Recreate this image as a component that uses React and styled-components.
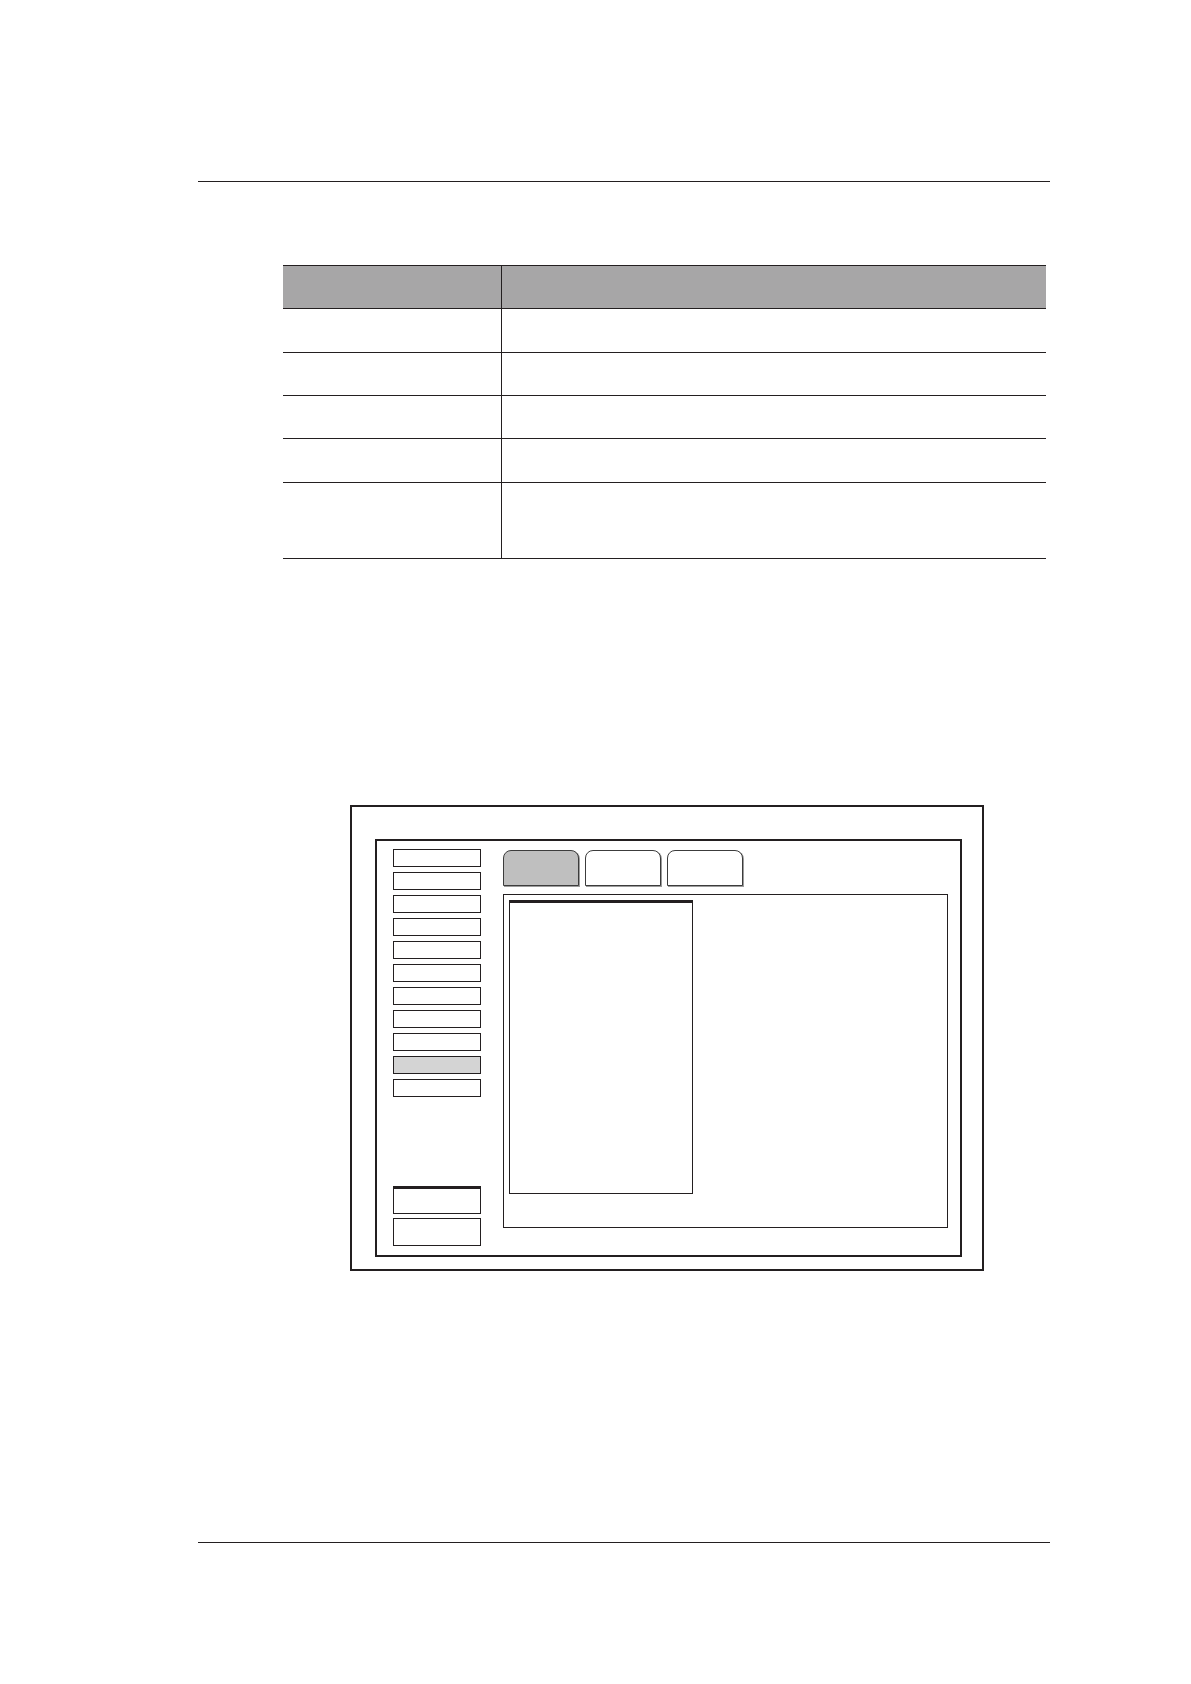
import React from 'react'
import styled, { createGlobalStyle } from "styled-components";

const GlobalStyle = createGlobalStyle`
  * {
    box-sizing: border-box;
  }
  body {
    margin: 0;
    background: #fff;
    font-family: "Liberation Sans", Arial, sans-serif;
  }
`;

const Page = styled.div`
  width: 1191px;
  height: 1684px;
  background: #fff;
  padding-top: 181px;
`;

const Column = styled.div`
  width: 852px;
  margin-left: 198px;
`;

const Rule = styled.div`
  height: 0;
  border-top: 1.5px solid #231f20;
  margin-top: ${p => p.top || 0}px;
`;

const Table = styled.div`
  width: 763px;
  margin-left: 85px;
  margin-top: 83px;
`;

const Row = styled.div`
  display: grid;
  grid-template-columns: 219px 1fr;
  height: ${p => p.h}px;
  border-bottom: 1.5px solid #231f20;
  ${p => p.head && `
    background: #a7a6a7;
    border-top: 1.5px solid #231f20;
  `}
`;

const Cell = styled.div`
  border-right: ${p => p.first ? "1.5px solid #231f20" : "none"};
`;

const Dialog = styled.div`
  width: 634px;
  height: 466px;
  margin-left: 151.5px;
  margin-top: 246px;
  border: 2px solid #231f20;
  padding: 32px 19.5px 12px 23px;
`;

const Panel = styled.div`
  height: 100%;
  border: 2px solid #231f20;
  display: flex;
  padding: 8px 12px 9.5px 16.5px;
`;

const Sidebar = styled.div`
  width: 88px;
  display: flex;
  flex-direction: column;
  justify-content: space-between;
`;

const ButtonGroup = styled.div`
  display: flex;
  flex-direction: column;
  gap: ${p => p.gap}px;
`;

const SideButton = styled.div`
  height: ${p => p.tall ? 27.5 : 18}px;
  border: 1.5px solid #231f20;
  border-top-width: ${p => p.heavy ? 3 : 1.5}px;
  background: ${p => p.active ? "#d4d4d4" : "#fff"};
`;

const Main = styled.div`
  margin-left: 22px;
  padding-top: 1px;
  display: flex;
  flex-direction: column;
`;

const Tabs = styled.div`
  display: flex;
  gap: 6px;
`;

const Tab = styled.div`
  width: 76px;
  height: 36px;
  border: 1px solid #3c3c3c;
  border-radius: 8px 8px 0 0;
  background: ${p => p.active ? "#bfbfbf" : "#fff"};
  box-shadow: 1px 1px 0 #9c9c9c;
`;

const Content = styled.div`
  width: 445px;
  height: 334px;
  margin-top: 8px;
  border: 1.5px solid #231f20;
  padding: 5px;
`;

const ListBox = styled.div`
  width: 183.5px;
  height: 294px;
  border: 1.5px solid #231f20;
  border-top-width: 3px;
`;

const rowHeights = [44, 43, 43, 44, 76];

const App = () => {
  return (
    <Page>
      <GlobalStyle />
      <Column>
        <Rule />
        <Table>
          <Row head h={44}>
            <Cell first />
            <Cell />
          </Row>
          {rowHeights.map((h, i) => (
            <Row key={i} h={h}>
              <Cell first />
              <Cell />
            </Row>
          ))}
        </Table>
        <Dialog>
          <Panel>
            <Sidebar>
              <ButtonGroup gap={5}>
                {Array.from({ length: 11 }).map((_, i) => (
                  <SideButton key={i} active={i === 9} />
                ))}
              </ButtonGroup>
              <ButtonGroup gap={4.5}>
                <SideButton tall heavy />
                <SideButton tall />
              </ButtonGroup>
            </Sidebar>
            <Main>
              <Tabs>
                <Tab active />
                <Tab />
                <Tab />
              </Tabs>
              <Content>
                <ListBox />
              </Content>
            </Main>
          </Panel>
        </Dialog>
        <Rule top={271} />
      </Column>
    </Page>
  )
}

export default App
